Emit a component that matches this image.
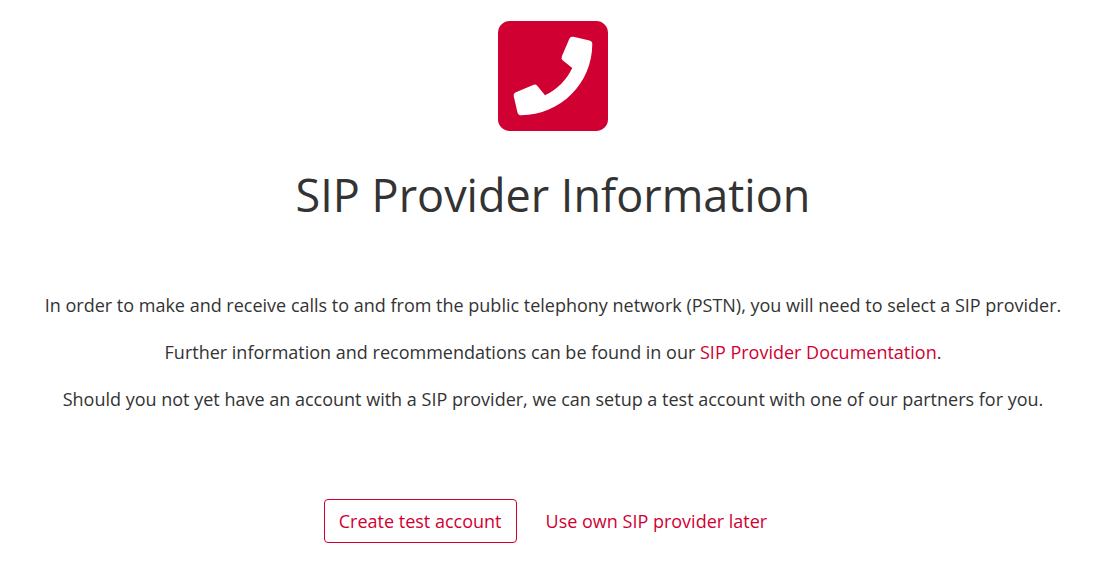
<main>
  <svg class="logo" viewBox="0 32 448 448" role="img" aria-label="Phone">
    <path fill="#d10032" d="M400 32H48A48 48 0 0 0 0 80v352a48 48 0 0 0 48 48h352a48 48 0 0 0 48-48V80a48 48 0 0 0-48-48z" />
    <path fill="#fff" d="M94 416c-7.033 0-13.057-4.873-14.616-11.627l-14.998-65a15 15 0 0 1 8.707-17.16l69.998-29.999a15 15 0 0 1 17.518 4.289l30.997 37.885c48.944-22.963 88.297-62.858 110.781-110.78l-37.886-30.997a15.001 15.001 0 0 1-4.289-17.518l30-69.998a15 15 0 0 1 17.16-8.707l65 14.998A14.997 14.997 0 0 1 384 126c0 160.292-129.945 290-290 290z" />
  </svg>
  <h1>SIP Provider Information</h1>
  <div class="copy">
    <p>In order to make and receive calls to and from the public telephony network (PSTN), you will need to select a SIP provider.</p>
    <p>Further information and recommendations can be found in our <a href="#documentation">SIP Provider Documentation</a>.</p>
    <p>Should you not yet have an account with a SIP provider, we can setup a test account with one of our partners for you.</p>
  </div>
  <div class="actions">
    <button class="outlined" type="button">Create test account</button>
    <button type="button">Use own SIP provider later</button>
  </div>
</main>

<style>
  :global(body) {
    margin: 0;
    background: #fff;
  }

  main {
    display: flex;
    flex-direction: column;
    align-items: center;
    padding: 21px 19px 20px 16px;
    color: #333;
    font: 18px/27px "Open Sans", sans-serif;
    text-align: center;
  }

  .logo {
    width: 110px;
    height: 110px;
  }

  h1 {
    margin: 31px 0 0;
    font-size: 45px;
    font-weight: 400;
    line-height: 66px;
  }

  .copy {
    display: grid;
    gap: 20px;
    margin-top: 64px;
  }

  p {
    margin: 0;
  }

  a {
    color: #d10032;
    text-decoration: none;
  }

  .actions {
    display: flex;
    flex-wrap: wrap;
    justify-content: center;
    margin-top: 86px;
  }

  button {
    height: 44px;
    padding: 0 14px;
    border: 1px solid transparent;
    border-radius: 4px;
    background: transparent;
    color: #d10032;
    font: inherit;
    cursor: pointer;
  }

  .outlined {
    border-color: #d10032;
    margin-right: 14px;
  }
</style>
